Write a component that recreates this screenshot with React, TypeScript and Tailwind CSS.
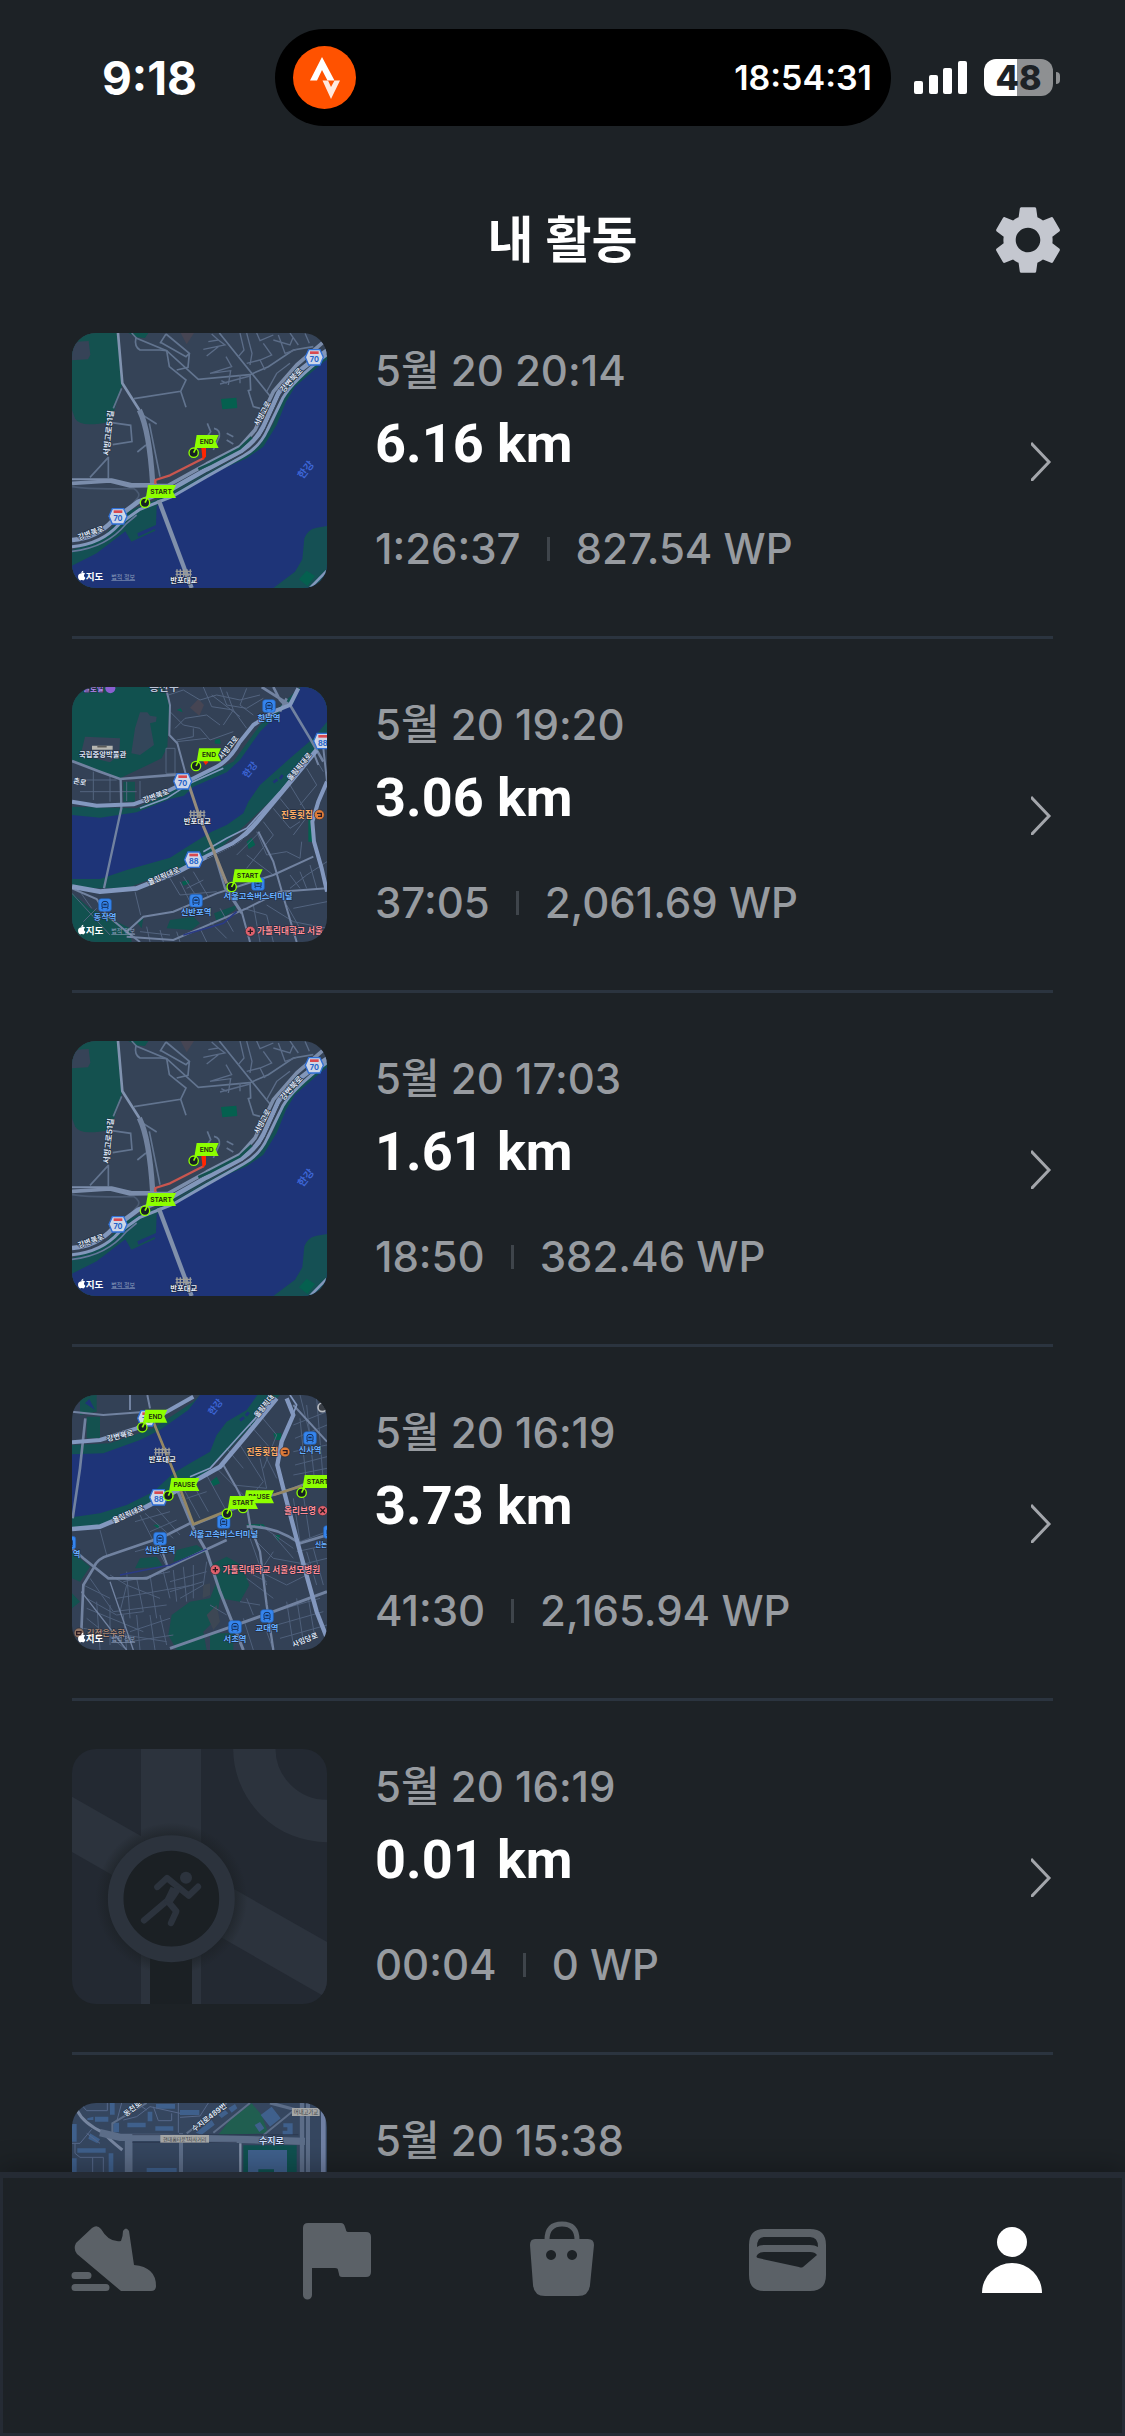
import React from 'react';
import { MdSettings } from 'react-icons/md';

type MapKind = 'river' | 'bridge' | 'terminal' | 'empty' | 'suji';

interface Activity {
  id: number;
  date: string;
  distance?: string;
  duration?: string;
  points?: string;
  map: MapKind;
}

const activities: Activity[] = [
  { id: 1, date: '5월 20 20:14', distance: '6.16 km', duration: '1:26:37', points: '827.54 WP', map: 'river' },
  { id: 2, date: '5월 20 19:20', distance: '3.06 km', duration: '37:05', points: '2,061.69 WP', map: 'bridge' },
  { id: 3, date: '5월 20 17:03', distance: '1.61 km', duration: '18:50', points: '382.46 WP', map: 'river' },
  { id: 4, date: '5월 20 16:19', distance: '3.73 km', duration: '41:30', points: '2,165.94 WP', map: 'terminal' },
  { id: 5, date: '5월 20 16:19', distance: '0.01 km', duration: '00:04', points: '0 WP', map: 'empty' },
  { id: 6, date: '5월 20 15:38', map: 'suji' },
];

// ---------- map pieces ----------

const Flag = ({ x, y, label }: { x: number; y: number; label: string }) => {
  const w = label === 'END' ? 68 : 86;
  return (
    <g>
      <path
        d={`M${x} ${y} L${x + 9} ${y - 53} H${x + 7 + w} L${x + w - 2} ${y - 33} L${x + 7 + w} ${y - 14} H${x + 10} Z`}
        fill="#8dff00"
      />
      <circle cx={x} cy={y} r="14" fill="#172023" stroke="#8dff00" strokeWidth="4" />
      <path d={`M${x} ${y} L${x + 7} ${y - 14}`} stroke="#8dff00" strokeWidth="5" />
      <text x={x + 5 + w / 2} y={y - 26} fontSize="20" fontWeight="600" textAnchor="middle" fill="#1c2a10">
        {label}
      </text>
    </g>
  );
};

const Shield = ({ x, y, n }: { x: number; y: number; n: string }) => (
  <g>
    <path
      d={`M${x - 17} ${y - 23} H${x + 17} L${x + 27} ${y} L${x + 17} ${y + 23} H${x - 17} L${x - 27} ${y} Z`}
      fill="#cdd6e8"
      stroke="#2f6fd6"
      strokeWidth="4"
    />
    <rect x={x - 13} y={y - 18} width="26" height="8" fill="#d8494f" />
    <text x={x} y={y + 14} fontSize="22" fontWeight="700" textAnchor="middle" fill="#2563c9">
      {n}
    </text>
  </g>
);

const Station = ({ x, y, name }: { x: number; y: number; name?: string }) => (
  <g>
    <rect x={x - 19} y={y - 19} width="38" height="38" rx="8" fill="#3585ee" stroke="#2460b4" strokeWidth="2" />
    <path
      d={`M${x - 9} ${y + 7} V${y - 5} Q${x - 9} ${y - 11} ${x} ${y - 11} T${x + 9} ${y - 5} V${y + 7} Z M${x - 7} ${y + 13} L${x - 10} ${y + 9} M${x + 7} ${y + 13} L${x + 10} ${y + 9}`}
      fill="none"
      stroke="#14305c"
      strokeWidth="3"
    />
    <rect x={x - 5} y={y - 4} width="10" height="5" fill="#14305c" />
    {name && (
      <Label x={x} y={y + 44} fill="#67aeff" size={25}>
        {name}
      </Label>
    )}
  </g>
);

interface LabelProps {
  x: number;
  y: number;
  fill?: string;
  size?: number;
  angle?: number;
  halo?: string;
  children: string;
}

const Label = ({ x, y, fill = '#dbe4f4', size = 22, angle = 0, halo = '#1c2638', children }: LabelProps) => (
  <text
    x={x}
    y={y}
    transform={`rotate(${angle} ${x} ${y})`}
    fontSize={size}
    fontWeight="700"
    textAnchor="middle"
    fill={fill}
    stroke={halo}
    strokeWidth="3"
    paintOrder="stroke"
  >
    {children}
  </text>
);

const Place = ({ x, y, color, mark }: { x: number; y: number; color: string; mark: string }) => (
  <g>
    <circle cx={x} cy={y} r="15" fill={color} stroke="#2a2f3c" strokeWidth="2" />
    <path d={mark} stroke="#2b1a22" strokeWidth="4" fill="none" />
  </g>
);

const AppleCredit = ({ y }: { y: number }) => (
  <g>
    <path
      d={`M64 ${y - 16} c4 -3 10 -2 11 1 c-5 3 -4 9 1 12 c-2 6 -5 9 -8 8 c-3 -1 -4 -1 -6 0 c-7 2 -14 -20 2 -21 Z M64 ${y - 17} c0 -4 2 -6 6 -7 c0 4 -2 7 -6 7 Z`}
      fill="#fff"
    />
    <text x="77" y={y + 4} fontSize="29" fontWeight="700" fill="#fff">
      지도
    </text>
    <text x="154" y={y + 1} fontSize="18" fill="#8c9dbb" textDecoration="underline">
      법적 정보
    </text>
  </g>
);

const Bridge = ({ x, y }: { x: number; y: number }) => (
  <g>
    <path
      d={`M${x - 24} ${y} h48 M${x - 24} ${y + 9} h48 M${x - 20} ${y - 6} v24 M${x - 10} ${y - 6} v24 M${x} ${y - 6} v24 M${x + 10} ${y - 6} v24 M${x + 20} ${y - 6} v24`}
      stroke="#9b9c98"
      strokeWidth="4"
    />
    <Label x={x} y={y + 36} fill="#e6ebf5">
      반포대교
    </Label>
  </g>
);

// ---------- maps ----------

const RiverMap = () => (
  <svg viewBox="36 39 765 765" className="size-full" aria-hidden="true">
    <rect x="36" y="39" width="765" height="765" fill="#354357" />
    <path d="M36 39 H172 L186 195 L165 265 L150 305 Q60 325 45 295 L36 270 Z" fill="#14514f" />
    <path d="M36 66 L86 63 L91 104 L84 118 L36 121 Z" fill="#364357" />
    <path d="M205 39 H265 L255 54 L228 52 Z" fill="#105450" />
    <path d="M362 39 H402 L380 73 Z" fill="#464553" />
    <path d="M483 237 L529 233 L532 264 L487 268 Z" fill="#05604f" />
    <path
      d="M801 100 L750 140 L690 190 L665 240 L640 310 L600 375 L550 405 L470 440 L380 490 L300 535 L200 575 L120 660 L36 690 V804 H801 Z"
      fill="#135053"
    />
    <path
      d="M801 118 L765 148 L705 200 L678 245 L650 315 L610 380 L560 415 L480 450 L380 508 L304 548 L290 558 L288 615 L232 640 L235 650 L284 627 L286 632 L214 665 L196 634 L110 700 L36 737 V804 H801 Z"
      fill="#1e3478"
    />
    <path d="M640 804 L705 755 L727 718 L733 655 Q742 628 770 623 L801 618 V804 Z" fill="#155054" />
    <path d="M717 778 L740 752 L765 768 L742 798 Z" fill="#05604f" />

    {/* side streets */}
    <g fill="none" stroke="#62748f" strokeWidth="5">
      <path d="M215 39 L230 55 L320 92 L415 178 L570 164 L625 140 L700 90 L760 80" />
      <path d="M228 52 Q222 80 240 90 L300 90 L320 92 L328 140 L378 180 L362 214 L222 236 M362 214 L378 262" />
      <path d="M318 42 L300 70 M318 42 L388 100 L378 110 L300 66 M388 100 L384 142 L350 150" />
      <path d="M478 39 L630 228 M570 164 L572 210 L565 212 L580 260 L600 265" />
      <path d="M185 205 L160 265 M145 410 V475 M145 412 L90 472 M155 308 L212 316 L216 365 L158 374" />
      <path d="M240 280 L290 312 M268 310 L300 470 M258 375 L232 396" />
      <path d="M442 310 L452 335 L440 352 M500 340 L520 350 M500 360 L520 372 M462 325 Q482 330 478 350 L460 390" />
      <path d="M36 500 Q100 510 220 505 Q245 520 232 535 L215 555" stroke="#4a5a72" />
    </g>
    <g fill="none" stroke="#5b6c87" strokeWidth="4">
      <path d="M540 39 L552 90 L535 110 M560 39 L576 100 L570 135 M590 39 L600 62 L640 45 M610 70 L635 105 L600 120 L560 130" />
      <path d="M640 60 L690 75 L700 50 M655 45 L675 100 L710 88 M690 39 L715 75 M735 40 L748 70 M600 120 L615 150" />
      <path d="M455 42 L475 60 L445 65 M475 60 L495 75 L430 88 M475 80 L440 108 M498 110 L515 140 L450 160 L512 152 L505 195" />
      <path d="M480 192 L570 168 M484 182 L500 190 M540 165 V190 M620 215 L650 160 L690 130" />
    </g>

    {/* expressway */}
    <g fill="none" strokeLinejoin="round">
      <path d="M174 39 L187 190 L238 270" stroke="#8092af" strokeWidth="8" />
      <path d="M238 270 Q268 330 278 490" stroke="#71829e" strokeWidth="16" />
      <path
        d="M36 490 L150 483 L210 498 L325 496 L440 432 L540 380 L585 330 L640 215 L710 135 L788 68"
        stroke="#7b8dab"
        strokeWidth="11"
      />
      <path d="M36 478 L155 478 L215 492 L290 492" stroke="#7b8dab" strokeWidth="6" />
      <path
        d="M36 660 Q110 655 160 600 L235 545 L330 510 L440 448 L545 392 Q590 360 610 320 L655 220 Q690 165 801 92"
        stroke="#8297bb"
        strokeWidth="14"
      />
      <path
        d="M36 680 Q125 672 178 612 L240 568 L340 528 L440 470 L550 408 Q600 380 622 330 L668 235 Q700 180 801 104"
        stroke="#8297bb"
        strokeWidth="9"
      />
      <path d="M36 694 Q140 684 200 610 L230 585" stroke="#64779a" strokeWidth="5" />
      <path d="M415 448 L450 432 L540 385 L575 352" stroke="#14514f" strokeWidth="8" />
      <path d="M345 515 L440 460 L548 401 Q595 372 616 326 L661 228" stroke="#364357" strokeWidth="3" />
      <path d="M296 540 L395 804" stroke="#8090ab" strokeWidth="13" />
      <path d="M750 804 L801 752" stroke="#8297bb" strokeWidth="8" />
      <path d="M286 492 V480 L330 466 L432 414" stroke="#c9564f" strokeWidth="7" />
      <path d="M424 384 H438 V410 L428 420 Z" fill="#ff2600" />
    </g>

    <Label x={154} y={340} angle={-84} size={24}>서빙고로51길</Label>
    <Label x={614} y={284} angle={-62}>서빙고로</Label>
    <Label x={700} y={186} angle={-48} size={24}>강변북로</Label>
    <Label x={95} y={646} angle={-20}>강변북로</Label>
    <Label x={746} y={456} angle={-52} size={31} fill="#3d66d6" halo="#1e3478">한강</Label>
    <Shield x={763} y={112} n="70" />
    <Shield x={174} y={589} n="70" />
    <Flag x={401} y={398} label="END" />
    <Flag x={255} y={548} label="START" />
    <Bridge x={371} y={754} />
    <AppleCredit y={776} />
  </svg>
);

const BridgeMap = () => (
  <svg viewBox="36 36 765 765" className="size-full" aria-hidden="true">
    <rect x="36" y="36" width="765" height="765" fill="#334156" />
    <path d="M36 36 H310 L328 90 L322 215 L305 250 L180 310 L36 255 Z" fill="#11514f" />
    <path d="M75 185 L180 190 L178 240 L150 262 L62 240 Z" fill="#364459" />
    <path d="M240 112 L262 112 L270 122 L290 125 L288 140 L270 145 L282 210 L240 240 L214 235 L225 160 Z" fill="#33465a" />
    <path d="M415 72 L432 90 L418 122 L390 98 Z" fill="#464553" />
    <path d="M465 194 L480 192 L482 206 L464 206 Z M350 105 L362 100 L368 112 Z" fill="#05604f" />
    <path d="M190 320 H225 V380 H190 Z" fill="#14514f" />
    <path d="M36 395 L230 400 L370 330 L520 260 L600 150 L720 36 H801 V200 L640 370 L460 540 L330 590 L200 640 L36 640 Z" fill="#135254" />
    <path
      d="M36 420 L120 428 L230 412 L330 372 L372 362 L400 335 L500 292 L540 255 L600 170 L660 110 L700 85 L722 36 H801 V140 L760 190 L690 250 L600 330 L565 380 L550 415 L500 450 L455 470 L390 510 L330 548 L200 585 L120 612 L36 612 Z"
      fill="#1e3478"
    />
    <path d="M36 655 L90 700 L210 760 L215 801 H36 Z M330 735 L400 725 L420 745 L395 765 L320 760 Z M230 740 L250 730 L245 760 Z M462 715 L530 690 L525 705 L470 740 Z" fill="#12514f" />
    <path d="M560 500 L575 488 L586 510 L566 522 Z M365 620 L385 615 L388 625 L370 632 Z M745 430 L757 430 L757 500 L745 500 Z" fill="#05604f" />
    <path d="M640 322 L652 314 M660 312 L668 300" stroke="#1e3478" strokeWidth="8" />

    {/* blocks and lanes */}
    <g fill="none" stroke="#53647f" strokeWidth="3">
      <path d="M325 60 L370 45 L420 75 L470 60 L540 75 L600 60 M430 36 L455 95 L520 105 L560 160 M480 36 L500 90 L560 100 L610 70" />
      <path d="M330 110 L370 150 L420 160 L450 195 L520 170 M345 160 L375 130 L440 120 L480 150 M400 160 V185 L350 195" />
      <path d="M455 60 L540 125 M500 50 L520 105 L490 150 M560 40 L540 90 L580 120 M350 200 L440 190 M318 220 H345 V295 H318 Z" />
      <path d="M60 315 H170 M100 290 V375 M60 350 H230 M150 300 V380 M200 320 V378 M240 318 V372" />
      <path d="M370 605 L420 680 M400 590 L445 665 M380 640 L430 615 M360 620 L395 690 M330 610 L360 660 L470 650" />
      <path d="M225 650 L242 720 M60 650 L95 700 M36 655 L150 780 M70 740 L110 700" />
      <path d="M530 540 L600 470 M560 580 L640 480 L610 440 M590 470 L620 540 L680 530 L720 550 L725 500 M640 400 L690 460 L720 440" />
      <path d="M690 330 L745 420 L700 480 M740 280 L770 330 L720 390 M760 240 L790 290 M660 370 L700 420 M560 540 L600 570 L640 600" />
      <path d="M690 640 L740 600 L801 560 M690 600 L720 640 M720 590 L740 640 M750 570 L770 640 M700 700 L801 680 M620 690 L700 740 L801 760" />
      <path d="M550 700 L620 720 L640 801 M580 690 L600 801 M450 740 L500 790 M480 700 L520 770 M420 760 L440 801 M680 690 L720 760" />
      <path d="M240 770 L330 780 M260 755 L270 801 M300 765 L310 801 M350 770 L360 801" />
    </g>
    <g fill="none" stroke="#7182a0" strokeWidth="6">
      <path d="M318 39 L330 90 L328 180 L352 205 L378 300" />
      <path d="M36 258 L120 290 L180 312 L360 298" strokeWidth="8" />
      <path d="M182 315 L184 400 L132 640" strokeWidth="7" />
      <path d="M36 640 L110 672 L140 720 L200 770 L240 801 M200 770 L250 725 L340 710 L470 655 L640 600 L760 545" />
      <path d="M200 785 L340 795 L560 700 L660 650 L801 640" />
      <path d="M595 470 L640 560 L680 700 L710 801 M500 640 L545 710 L570 801" />
      <path d="M605 36 L690 90 L750 190 L790 260 M680 95 L660 75 L640 36 M660 110 L680 70" strokeWidth="8" />
      <path d="M460 525 L495 640 L545 715" strokeWidth="7" />
      <path d="M790 220 L801 320 M760 230 L775 270" />
    </g>
    <path d="M370 780 L490 745 L530 710" fill="none" stroke="#2a3a86" strokeWidth="5" />
    <g fill="none" stroke="#8398bf" strokeLinejoin="round">
      <path d="M36 380 L110 392 L220 388 L310 355 L380 320 L470 275 Q510 255 540 200 L580 150 L640 110 L690 90 L715 40" strokeWidth="12" />
      <path d="M240 400 L320 370 L390 325 L490 280" strokeWidth="5" />
      <path d="M36 635 L120 650 L230 640 L350 592 L440 545 L520 505 Q560 480 600 430 L700 310 L770 225" strokeWidth="14" />
      <path d="M430 530 L500 490 L560 460 L660 350 L750 240" strokeWidth="5" />
      <path d="M801 320 L775 380 L757 440 L762 500 L785 580 L801 650" strokeWidth="12" />
    </g>
    <path d="M440 550 L520 512 L560 484" stroke="#334156" strokeWidth="3" fill="none" />
    <path d="M385 325 L420 430 L462 530 L500 625" fill="none" stroke="#958b7c" strokeWidth="9" />
    <path d="M430 260 L437 250 L445 262 L437 270 Z" fill="#ff2600" />

    <g>
      <Label x={100} y={48} fill="#b58af0">글로벌</Label>
      <circle cx="151" cy="40" r="15" fill="#8a5fd0" />
      <Label x={312} y={48} size={32} fill="#b9c3d6">용산구</Label>
      <path d="M96 212 H158 V224 H96 Z" fill="#b5b5b0" />
      <path d="M112 215 H140" stroke="#5a5a58" strokeWidth="5" />
    </g>
    <Label x={128} y={247}>국립중앙박물관</Label>
    <Label x={58} y={328} angle={12}>촌로</Label>
    <Label x={512} y={222} angle={-52}>서빙고로</Label>
    <Label x={290} y={370} angle={-20}>강변북로</Label>
    <Label x={724} y={280} angle={-50}>올림픽대로</Label>
    <Label x={314} y={610} angle={-24}>올림픽대로</Label>
    <Label x={578} y={290} angle={-52} size={28} fill="#3d66d6" halo="#1e3478">한강</Label>
    <Bridge x={412} y={412} />
    <Label x={711} y={429} size={26} fill="#ffae66">진동횟집</Label>
    <Place x={778} y={419} color="#e07b38" mark="M771 415 H784 V424 H774" />
    <Station x={627} y={93} name="한남역" />
    <Station x={135} y={690} name="동작역" />
    <Station x={408} y={677} name="신반포역" />
    <Station x={594} y={627} name="서울고속버스터미널" />
    <Shield x={368} y={319} n="70" />
    <Shield x={401} y={554} n="88" />
    <Shield x={788} y={198} n="88" />
    <Flag x={408} y={273} label="END" />
    <Flag x={515} y={636} label="START" />
    <Place x={571} y={769} color="#e0616c" mark="M563 769 H579 M571 761 V777" />
    <Label x={690} y={778} size={26} fill="#ff8c95">가톨릭대학교 서울</Label>
    <AppleCredit y={773} />
  </svg>
);

const TerminalMap = () => (
  <svg viewBox="36 30 765 765" className="size-full" aria-hidden="true">
    <rect x="36" y="30" width="765" height="765" fill="#334156" />
    <path d="M60 30 H110 V80 L60 90 Z M80 95 H120 V160 H80 Z" fill="#14514f" />
    <path d="M75 55 L88 42 L105 75 Z" fill="#1e3478" />
    <path d="M36 180 L150 175 L280 130 L400 50 L420 30 H660 L500 200 L400 300 L250 370 L120 420 L36 430 Z" fill="#135254" />
    <path
      d="M36 208 L130 205 L240 165 L300 135 L385 75 L420 30 H592 L560 75 L500 110 L470 150 L450 200 L390 235 L340 265 L280 320 L200 360 L120 385 L36 397 Z"
      fill="#1e3478"
    />
    <path d="M540 106 L552 97 M558 92 L566 82" stroke="#1e3478" strokeWidth="9" />
    <path
      d="M240 520 L290 515 L310 545 L225 550 Z M350 495 L410 480 L440 500 L340 530 Z M36 500 L90 545 L60 590 L36 580 Z M36 625 L60 650 L36 670 Z M450 540 L500 515 L545 540 L568 600 L540 650 L480 640 L470 700 L430 740 L440 795 H350 L325 750 L335 690 L390 650 L450 640 L470 590 Z M450 745 H520 V795 H450 Z"
      fill="#14524f"
    />
    <path d="M440 690 L470 660 L480 710 L460 735 Z M430 600 L450 595 L450 630 L428 640 Z" fill="#3d4754" />
    <path d="M452 290 L470 275 L480 295 L458 304 Z M560 418 H610 L620 430 H565 Z M645 450 L660 450 L655 470 Z M640 145 L664 145 V165 L645 165 Z M280 420 L298 418 L296 432 Z" fill="#05604f" />

    {/* blocks and lanes */}
    <g fill="none" stroke="#4f607b" strokeWidth="3">
      <path d="M120 435 L140 510 M240 390 L320 545 M255 385 L340 460 M290 370 L360 450 M270 440 L350 405 M225 410 L330 380 M225 500 L300 480" />
      <path d="M370 310 L420 400 M400 300 L445 380 M380 340 L440 320 M440 270 L500 380 M470 250 L560 340 M490 240 L540 180 L610 290 L560 350" />
      <path d="M500 190 L550 250 M540 150 L600 90 L650 150 L610 250 M570 120 L640 200 M600 180 L650 280 M520 300 L620 310 L600 220" />
      <path d="M150 570 L200 600 L180 680 M190 590 L330 560 M200 600 L300 640 M230 580 L250 680 M270 570 L290 700 M310 560 L330 640 M170 640 L400 600" />
      <path d="M340 555 L350 650 M370 545 L380 650 M400 540 V640 M160 680 L320 660 M330 590 L440 560 M330 620 L430 590 M200 560 L210 700" />
      <path d="M80 640 L170 690 L250 680 M80 670 L250 740 M80 700 L200 795 M110 650 L120 795 M150 660 L150 780 M190 690 L200 795 M230 690 L240 795 M270 690 L285 795" />
      <path d="M70 730 L320 770 M70 600 L150 640 M90 580 L160 680 M210 740 L330 700 M210 770 L340 750 M300 690 L320 780" />
      <path d="M700 120 L801 80 M705 160 L801 120 M700 200 L801 180 M705 240 L801 215 M700 270 L801 250 M720 100 L740 300 M740 60 L765 300 M770 40 L790 290 M720 30 L750 150" />
      <path d="M560 440 L640 520 L750 540 M600 420 L700 490 M570 460 L620 600 M640 500 L600 560 L680 600 L740 570 M540 550 L620 590 M560 580 L640 640" />
      <path d="M700 340 L720 470 L801 440 M730 330 L750 460 M640 450 L700 520 M710 500 L801 480 M720 540 L801 520 M740 500 L770 600 M760 490 L790 600" />
      <path d="M640 680 L780 640 M650 720 L790 680 M660 760 L801 720 M680 650 L700 780 M710 640 L730 770 M745 640 L765 760 M620 740 L640 795 M550 700 L580 795" />
      <path d="M440 530 L430 600 L360 640 M500 690 L450 660 M600 660 L540 650 M560 640 L580 690" />
    </g>
    <g fill="none" stroke="#7182a0" strokeWidth="6">
      <path d="M76 100 L60 250 L38 400" strokeWidth="8" />
      <path d="M36 80 L130 90 L260 80 M210 30 V75 M262 30 L270 70" />
      <path d="M400 410 L310 455 L150 510 Q110 520 100 550 L70 600 L64 740 M36 490 L70 520 L145 580 L260 580 L350 535 L500 465" strokeWidth="8" />
      <path d="M350 310 L400 430 L440 500 L480 620 L550 795" strokeWidth="9" />
      <path d="M400 420 L500 380 L640 330 L700 310 L780 280" strokeWidth="7" />
      <path d="M560 360 L570 420 L600 500 L620 660 L640 795" strokeWidth="7" />
      <path d="M560 425 Q640 420 720 475 L801 450" strokeWidth="8" />
      <path d="M330 790 L500 730 L640 680 L801 620" strokeWidth="9" />
      <path d="M490 240 L530 310 L560 370 M300 480 L325 550 M700 60 L801 170" />
      <path d="M64 620 L200 795 M150 590 L220 795" strokeWidth="4" />
    </g>
    <path d="M180 570 L330 540 L440 492" fill="none" stroke="#2a3a86" strokeWidth="4" />
    <g fill="none" stroke="#8398bf" strokeLinejoin="round">
      <path d="M36 172 L120 165 L230 130 L320 80 L400 35" strokeWidth="12" />
      <path d="M36 432 L120 425 L250 370 L400 290 L480 245 L560 150 L650 40" strokeWidth="14" />
      <path d="M390 275 L450 250 L540 150 L640 40" strokeWidth="5" />
      <path d="M680 40 L700 90 L665 170 L652 240 L675 330 L720 500 L770 680 L801 760" strokeWidth="13" />
      <path d="M690 30 L710 60 L690 110" strokeWidth="5" />
    </g>
    <path d="M280 110 L345 270 L400 418 L500 378 M640 330 L725 303" fill="none" stroke="#958763" strokeWidth="8" />

    <Shield x={260} y={100} n="70" />
    <Shield x={296} y={337} n="88" />
    <Label x={182} y={160} angle={-14}>강변북로</Label>
    <Label x={618} y={68} angle={-52}>올림픽대</Label>
    <Label x={208} y={394} angle={-24}>올림픽대로</Label>
    <Label x={474} y={72} angle={-52} size={28} fill="#3d66d6" halo="#1e3478">한강</Label>
    <Bridge x={307} y={194} />
    <Label x={607} y={211} size={26} fill="#ffae66">진동횟집</Label>
    <Place x={675} y={201} color="#e07b38" mark="M668 197 H681 V206 H671" />
    <circle cx="787" cy="67" r="13" fill="#3a3f46" stroke="#b6bac0" strokeWidth="5" />
    <Station x={750} y={159} name="신사역" />
    <Station x={300} y={461} name="신반포역" />
    <Station x={491} y={411} name="서울고속버스터미널" />
    <Station x={525} y={726} name="서초역" />
    <Station x={621} y={693} name="교대역" />
    <Station x={810} y={441} />
    <Label x={783} y={485} fill="#67aeff" size={20}>신논</Label>
    <Station x={28} y={473} />
    <Label x={50} y={517} fill="#67aeff" size={25}>역</Label>
    <Label x={720} y={387} size={26} fill="#ff8c95">올리브영</Label>
    <Place x={788} y={377} color="#e0616c" mark="M781 370 L795 384 M795 370 L781 384" />
    <Place x={466} y={554} color="#e0616c" mark="M458 554 H474 M466 546 V562" />
    <Label x={634} y={564} size={26} fill="#ff8c95">가톨릭대학교 서울성모병원</Label>
    <Flag x={247} y={127} label="END" />
    <Flag x={325} y={332} label="PAUSE" />
    <Flag x={549} y={369} label="PAUSE" />
    <Flag x={501} y={386} label="START" />
    <Flag x={725} y={323} label="START" />
    <Label x={738} y={772} angle={-22}>사임당로</Label>
    <Place x={57} y={744} color="#8f7363" mark="M50 740 H63 V749 H50 Z" />
    <Label x={138} y={752} size={25} fill="#a98672">김정은수학</Label>
    <AppleCredit y={767} />
  </svg>
);

const EmptyMap = () => (
  <svg viewBox="36 27 765 765" className="size-full" aria-hidden="true">
    <defs>
      <radialGradient id="pin-shadow">
        <stop offset="0.8" stopColor="#1b2024" stopOpacity="0.7" />
        <stop offset="1" stopColor="#1b2024" stopOpacity="0" />
      </radialGradient>
    </defs>
    <rect x="36" y="27" width="765" height="765" fill="#232932" />
    <g fill="#2c333d">
      <path d="M243 27 H423 V792 H243 Z" />
      <path d="M36 170 L801 606 V774 L36 336 Z" />
    </g>
    <circle cx="801" cy="25" r="218" fill="none" stroke="#2c333d" strokeWidth="127" />
    <circle cx="334" cy="476" r="228" fill="url(#pin-shadow)" />
    <path d="M270 640 H396 V792 H270 Z" fill="#1b2024" />
    <circle cx="334" cy="476" r="167" fill="#1b2024" stroke="#2c333d" strokeWidth="47" />
    <circle cx="378" cy="413" r="18" fill="#2c333d" />
    <g fill="none" stroke="#2c333d" strokeWidth="19" strokeLinecap="round" strokeLinejoin="round">
      <path d="M292 441 L321 414 L386 467 L414 440" />
      <path d="M252 541 L322 482 L354 446" />
      <path d="M322 482 L349 514 L333 549" />
    </g>
    <path d="M332 440 L362 452 L335 492 L312 482 Z" fill="#2c333d" />
  </svg>
);

const SujiMap = () => (
  <svg viewBox="66 39 765 765" className="size-full" aria-hidden="true">
    <rect x="66" y="39" width="765" height="765" fill="#35465f" />
    <path d="M605 40 L635 75 L655 130 L505 134 L540 90 Z" fill="#205e50" />
    <path d="M580 166 H740 V300 H580 Z" fill="#0f5150" />
    <g fill="#3f608c">
      <path d="M180 39 H194 V74 H180 Z M135 80 H175 V95 H135 Z M112 85 L130 80 V90 H112 Z M66 102 H80 V155 H66 Z M318 42 H375 V56 H318 Z M390 60 H448 V75 H390 Z" />
      <path d="M293 65 H307 V94 H293 Z M232 98 H287 V112 H232 Z M316 109 H370 V122 H316 Z M190 98 H207 V127 H190 Z M82 175 H167 V188 H82 Z M66 205 H80 V246 H66 Z M176 190 H190 V246 H176 Z" />
      <path d="M120 130 L150 148 L142 160 L115 146 Z M437 128 L485 90 L494 104 L455 134 Z M505 75 L525 60 L535 70 L515 84 Z M535 55 L555 42 L562 55 L545 68 Z M632 75 L665 50 L692 85 L660 110 Z" />
      <path d="M614 105 L630 96 L643 115 L628 126 Z M700 100 H728 V134 H698 V122 H712 V112 H700 Z M594 180 H711 V246 H672 V238 H625 V246 H594 Z M290 234 H380 V250 H290 Z" />
    </g>
    <g fill="none" stroke="#56688a" strokeWidth="3">
      <path d="M95 45 L110 62 H172 V39 M125 118 L90 160 H66 M75 160 V190 L90 202 H160 V246 M128 202 V246 M110 130 L150 160" />
      <path d="M215 39 L200 95 M220 90 L260 80 L300 50 L390 70 M310 50 L325 92 H365 V70 M385 39 V128 M390 82 L450 78 L475 39 M260 39 L290 60" />
    </g>
    <g fill="none" stroke="#5c6d88">
      <path d="M410 130 L530 39 M490 128 L600 39 M640 136 L730 62 M187 130 V100 L290 39" strokeWidth="6" />
      <path d="M82 62 Q100 100 160 128 Q180 150 217 180" strokeWidth="9" stroke="#76859f" />
      <path d="M150 128 L210 142 H350 L765 154" strokeWidth="22" />
      <path d="M232 150 V300 M240 150 V300" strokeWidth="15" />
      <path d="M393 130 V300" strokeWidth="12" />
      <path d="M571 160 V300" strokeWidth="7" stroke="#8290a8" />
      <path d="M756 39 V300" strokeWidth="13" />
      <path d="M774 39 V300" strokeWidth="12" />
      <path d="M660 39 L740 60" strokeWidth="10" />
      <path d="M820 39 V300" strokeWidth="14" stroke="#6f80a4" />
    </g>
    <path d="M247 134 H745 M247 157 H560" stroke="#28344a" strokeWidth="2" />
    <Label x={252} y={62} angle={-38}>동천로</Label>
    <Label x={482} y={88} angle={-38}>수지로489번</Label>
    <Label x={664} y={162} size={27} fill="#cfe0ff">수지로</Label>
    <rect x="331" y="135" width="146" height="23" fill="#a4a6a6" />
    <text x="404" y="152" fontSize="15" textAnchor="middle" fill="#3a3d42">현대홈타운1차사거리</text>
    <rect x="726" y="54" width="83" height="24" fill="#a4a6a6" />
    <text x="768" y="72" fontSize="16" textAnchor="middle" fill="#3a3d42">머내고가교</text>
  </svg>
);

const maps: Record<MapKind, React.FC> = {
  river: RiverMap,
  bridge: BridgeMap,
  terminal: TerminalMap,
  empty: EmptyMap,
  suji: SujiMap,
};

// ---------- chrome ----------

const StatusBar = () => (
  <div className="flex items-center pt-[29px]">
    <div className="w-[275px] pl-[102px] text-[46px] leading-[60px] font-bold text-white">9:18</div>
    <div className="flex h-[97px] flex-1 items-center justify-between rounded-full bg-black pr-[19px] pl-[18px]">
      <svg viewBox="0 0 63 63" className="size-[63px]" aria-hidden="true">
        <circle cx="31.5" cy="31.5" r="31.5" fill="#ff5200" />
        <path d="M29 11 L41.500 34.500 H34.500 L29 24 L24 34.500 H17 Z" fill="#fff" />
        <path d="M29.500 34.500 H35 L38 41 L41.500 34.500 H47 L38 53 Z" fill="#ffe9df" />
      </svg>
      <span className="text-[34px] leading-[60px] font-semibold text-white">18:54:31</span>
    </div>
    <div className="flex w-[234px] items-center gap-[17px] pl-[23px]">
      <svg viewBox="0 0 53 33" className="h-[33px] w-[53px]" fill="#fff" aria-hidden="true">
        <rect x="0" y="20" width="9" height="13" rx="2" />
        <rect x="15" y="14" width="9" height="19" rx="2" />
        <rect x="29" y="7" width="9" height="26" rx="2" />
        <rect x="44" y="0" width="9" height="33" rx="2" />
      </svg>
      <div className="flex items-center gap-[3px]">
        <div className="flex h-[37px] w-[69px] items-center justify-center rounded-xl bg-linear-to-r from-white from-48% to-[#8e9092] to-48% text-[34px] leading-[37px] font-extrabold text-[#1d2226]">
          48
        </div>
        <div className="h-3 w-1 rounded-r-full bg-[#8e9092]" />
      </div>
    </div>
  </div>
);

const Header = () => (
  <header className="mt-[30px] grid h-[168px] grid-cols-[1fr_auto_1fr] items-center px-14">
    <h1 className="col-start-2 text-[50px] leading-[72px] font-bold text-white">내 활동</h1>
    <button type="button" aria-label="설정" className="justify-self-end text-[#c4c7cf]">
      <MdSettings className="size-[82px]" />
    </button>
  </header>
);

const ActivityRow = ({ activity }: { activity: Activity }) => {
  const Map = maps[activity.map];

  return (
    <li className="border-b-3 border-[#2b343f] py-12 first:pt-0 last:border-b-0">
      <a href="#" className="flex items-center gap-12">
        <div className="size-[255px] shrink-0 overflow-hidden rounded-3xl">
          <Map />
        </div>
        <div className="flex-1 self-start pt-2 text-[42px] leading-[60px] font-medium text-[#979ba0]">
          <p>{activity.date}</p>
          {activity.distance && (
            <p className="font-[Roboto] text-[54px] leading-[86px] font-bold text-white">{activity.distance}</p>
          )}
          {activity.duration && (
            <div className="mt-8 flex items-center gap-[26px]">
              <span>{activity.duration}</span>
              <span className="h-6 w-[3px] bg-[#3f454b]" />
              <span>{activity.points}</span>
            </div>
          )}
        </div>
        <svg viewBox="0 0 22 40" className="h-10 w-[22px]" fill="none" stroke="#a3a6ab" strokeWidth="3" aria-hidden="true">
          <path d="M0 2 L18 21 L0 40" />
        </svg>
      </a>
    </li>
  );
};

const tabs = [
  {
    name: '걷기',
    icon: (
      <path d="M4 17 L20 2 Q25 -2 29 3 Q37 17 49 15 Q51 10 51 5 Q54 0 57 5 L62 39 Q84 41 84 60 Q84 65 79 65 H49 L5 28 Q1 23 4 17 Z M3 46 H16 A3 3 0 0 1 16 53 H3 A3 3 0 0 1 3 46 Z M3 58 H34 A3 3 0 0 1 34 65 H3 A3 3 0 0 1 3 58 Z" />
    ),
  },
  {
    name: '챌린지',
    icon: (
      <path d="M12 -3 H45 Q48 -3 49 1 L50 4 Q50 6 53 6 H70 Q75 6 75 11 V46 Q75 51 70 51 H46 Q43 51 43 48 L42 44 Q42 42 39 42 H16 V69 A4 4 0 0 1 7 69 V2 Q7 -3 12 -3 Z" />
    ),
  },
  {
    name: '상점',
    icon: (
      <>
        <path
          fillRule="evenodd"
          d="M14 13 H67 Q73 13 73 19 L69 59 Q68 70 57 70 H24 Q13 70 12 59 L9 19 Q9 13 14 13 Z M30 24 a5 5 0 1 0 0.100 0 Z M51 24 a5 5 0 1 0 0.100 0 Z"
        />
        <path d="M26 14 Q26 -2 41 -2 T56 14" fill="none" stroke="currentColor" strokeWidth="5" />
      </>
    ),
  },
  {
    name: '지갑',
    icon: (
      <path
        fillRule="evenodd"
        d="M19 3 H65 Q81 3 81 19 V49 Q81 65 65 65 H19 Q4 65 4 49 V19 Q4 3 19 3 Z M19 11 Q12 11 12 21 Q14 19 19 19 H65 Q70 19 73 21 Q73 11 65 11 Z M19 26 H65 Q70 26 72 29 L58 41 Q56 42 54 41 L13 32 Q10 31 13 28 Q15 26 19 26 Z"
      />
    ),
  },
  {
    name: '내 활동',
    icon: (
      <>
        <circle cx="43" cy="16" r="15" />
        <path d="M13 67 A30 30 0 0 1 73 67 Z" />
      </>
    ),
    active: true,
  },
];

const TabBar = () => (
  <nav className="flex h-[264px] shrink-0 items-start justify-between border-3 border-t-6 border-[#252b34] bg-[#1d2226] px-[69px] pt-12 shadow-[0_-6px_24px_rgba(0,0,0,0.25)]">
    {tabs.map((tab) => (
      <button
        key={tab.name}
        type="button"
        aria-label={tab.name}
        className={tab.active ? 'text-white' : 'text-[#5b6167]'}
      >
        <svg viewBox="0 0 84 66" className="h-[66px] w-[84px] overflow-visible" fill="currentColor" aria-hidden="true">
          {tab.icon}
        </svg>
      </button>
    ))}
  </nav>
);

const App: React.FC = () => (
  <div className="flex h-screen flex-col bg-[#1d2226] font-[Inter,'Noto_Sans_CJK_KR',sans-serif]">
    <StatusBar />
    <Header />
    <main className="min-h-0 flex-1 overflow-y-auto px-[72px] pt-[9px] [scrollbar-width:none]">
      <ul>
        {activities.map((activity) => (
          <ActivityRow key={activity.id} activity={activity} />
        ))}
      </ul>
    </main>
    <TabBar />
  </div>
);

export default App;
